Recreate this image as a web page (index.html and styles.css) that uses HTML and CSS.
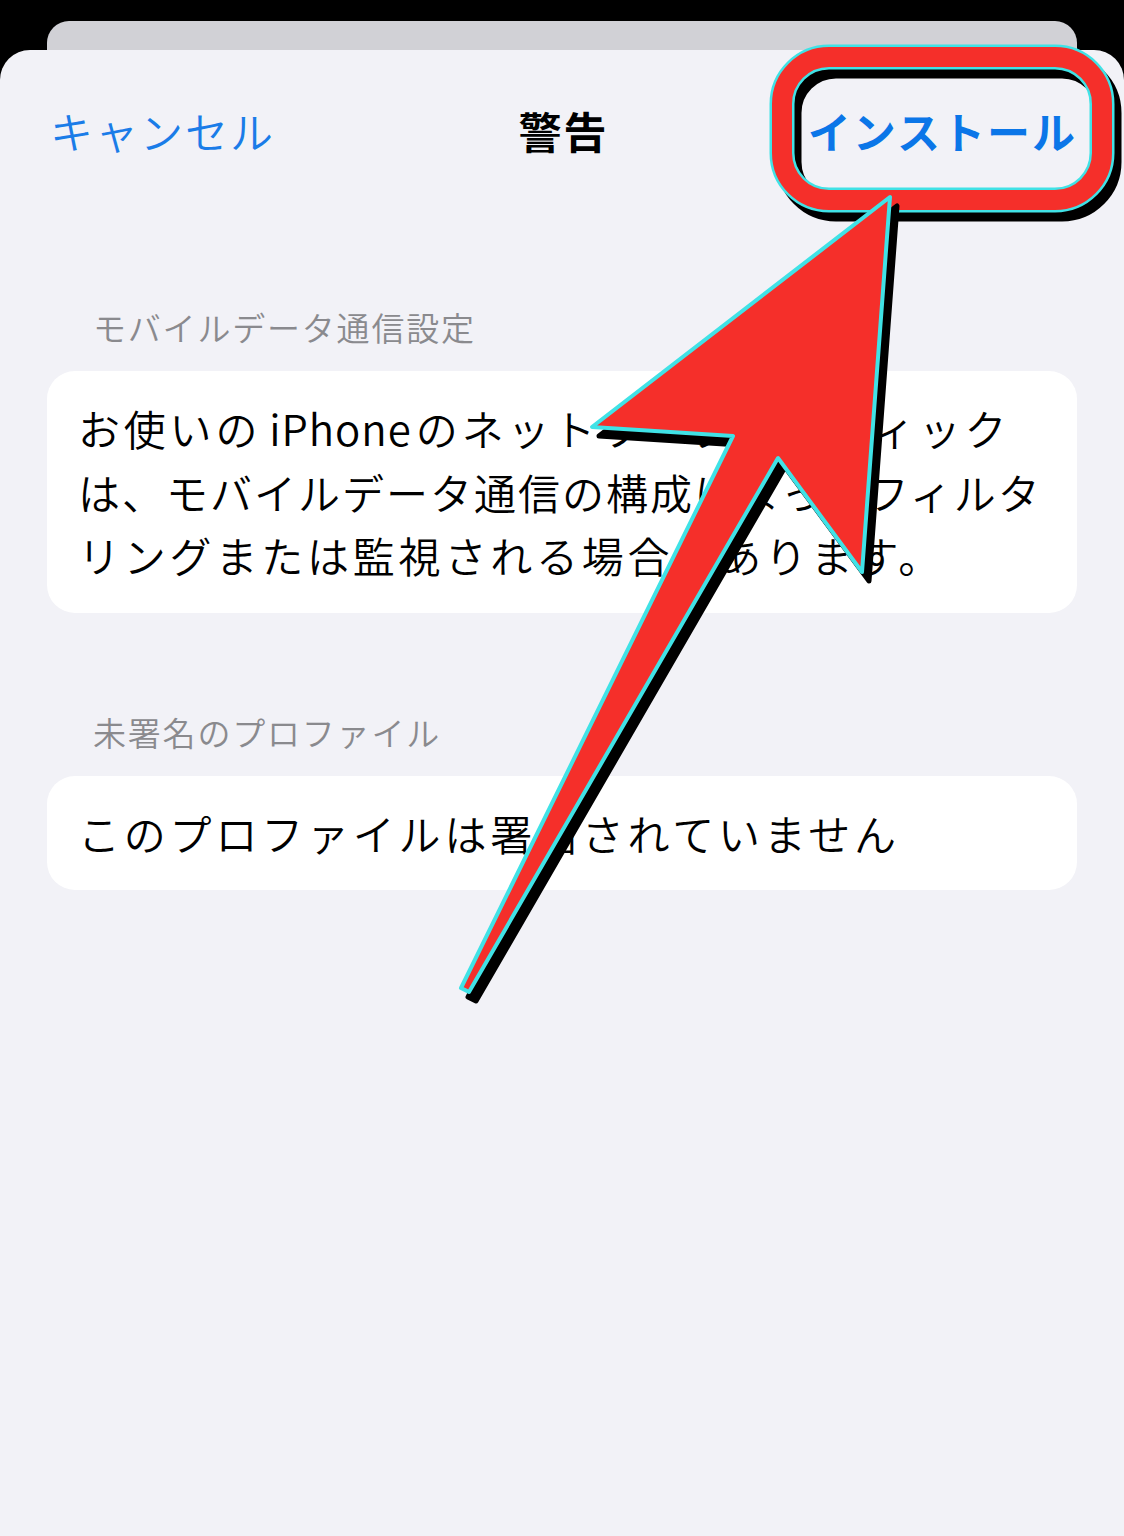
FILE: index.html
```html
<!DOCTYPE html>
<html>
  <head>
    <title>警告</title>
    <link rel="stylesheet" href="styles.css">
  </head>
  <body>
    <div class="screen">
      <div class="back-card"></div>

      <div class="sheet">
        <div class="nav">
          <div class="nav-left">キャンセル</div>
          <div class="nav-title">警告</div>
          <div class="nav-right">インストール</div>
        </div>

        <div class="group">
          <div class="group-title">モバイルデータ通信設定</div>
          <div class="card">
            <div class="line">お使いの<span class="latin">iPhone</span>のネットワークトラフィック</div>
            <div class="line tight">は、モバイルデータ通信の構成によってフィルタ</div>
            <div class="line">リングまたは監視される場合があります。</div>
          </div>
        </div>

        <div class="group">
          <div class="group-title">未署名のプロファイル</div>
          <div class="card">
            <div class="line">このプロファイルは署名されていません</div>
          </div>
        </div>
      </div>

      <!-- annotation drawn over the screenshot -->
      <svg class="markup" width="1124" height="1536" viewBox="0 0 1124 1536">
        <g transform="translate(7 9)">
          <rect x="782" y="57" width="320" height="143" rx="47" fill="none" stroke="#000" stroke-width="25"/>
        </g>
        <rect x="782" y="57" width="320" height="143" rx="47" fill="none" stroke="#40e2e6" stroke-width="25"/>
        <rect x="782" y="57" width="320" height="143" rx="47" fill="none" stroke="#f52f2a" stroke-width="20"/>

        <g transform="translate(7 9)">
          <polygon points="890,197 862,572 778,458 469,992 461,988 733,436 592,427" fill="#000" stroke="#000" stroke-width="5" stroke-linejoin="round"/>
        </g>
        <polygon points="890,197 862,572 778,458 469,992 461,988 733,436 592,427" fill="#f52f2a" stroke="#40e2e6" stroke-width="4" stroke-linejoin="round"/>
      </svg>
    </div>
  </body>
</html>
```

FILE: styles.css
```css
body {
  margin: 0;
  background-color: #000;
  font-family: "Noto Sans CJK JP", "Noto Sans", sans-serif;
}

.screen {
  position: relative;
  width: 1124px;
  height: 1536px;
  overflow: hidden;
  padding-top: 21px;
  box-sizing: border-box;
}

.back-card {
  height: 29px;
  margin: 0 47px;
  background-color: #d1d1d6;
  border-radius: 22px 22px 0 0;
}

.sheet {
  height: 1486px;
  background-color: #f2f2f7;
  border-radius: 30px 30px 0 0;
}

.nav {
  display: grid;
  grid-template-columns: 1fr auto 1fr;
  align-items: center;
  height: 160px;
  padding: 0 47px 0 50px;
  font-size: 43px;
  letter-spacing: 2px;
}

.nav-left {
  font-weight: 350;
  color: #1a7ce8;
}

.nav-title {
  font-weight: bold;
  color: #000;
}

.nav-right {
  justify-self: end;
  font-weight: bold;
  color: #0b76e8;
}

.group {
  margin-top: 97px;
}

.group + .group {
  margin-top: 99px;
}

.group-title {
  padding-left: 93px;
  margin-bottom: 24px;
  font-size: 33px;
  font-weight: 350;
  line-height: 40px;
  letter-spacing: 1.8px;
  color: #8a8a8e;
}

.card {
  margin: 0 47px;
  padding: 25px 10px 26px 31px;
  background-color: #fff;
  border-radius: 28px;
}

.line {
  font-size: 42px;
  font-weight: 350;
  line-height: 63.5px;
  letter-spacing: 3.8px;
  white-space: nowrap;
  color: #000;
}

.line.tight {
  letter-spacing: 2px;
}

.latin {
  margin: 0 4px 0 8px;
  letter-spacing: 1px;
}

.markup {
  position: absolute;
  top: 0;
  left: 0;
  pointer-events: none;
}
```
